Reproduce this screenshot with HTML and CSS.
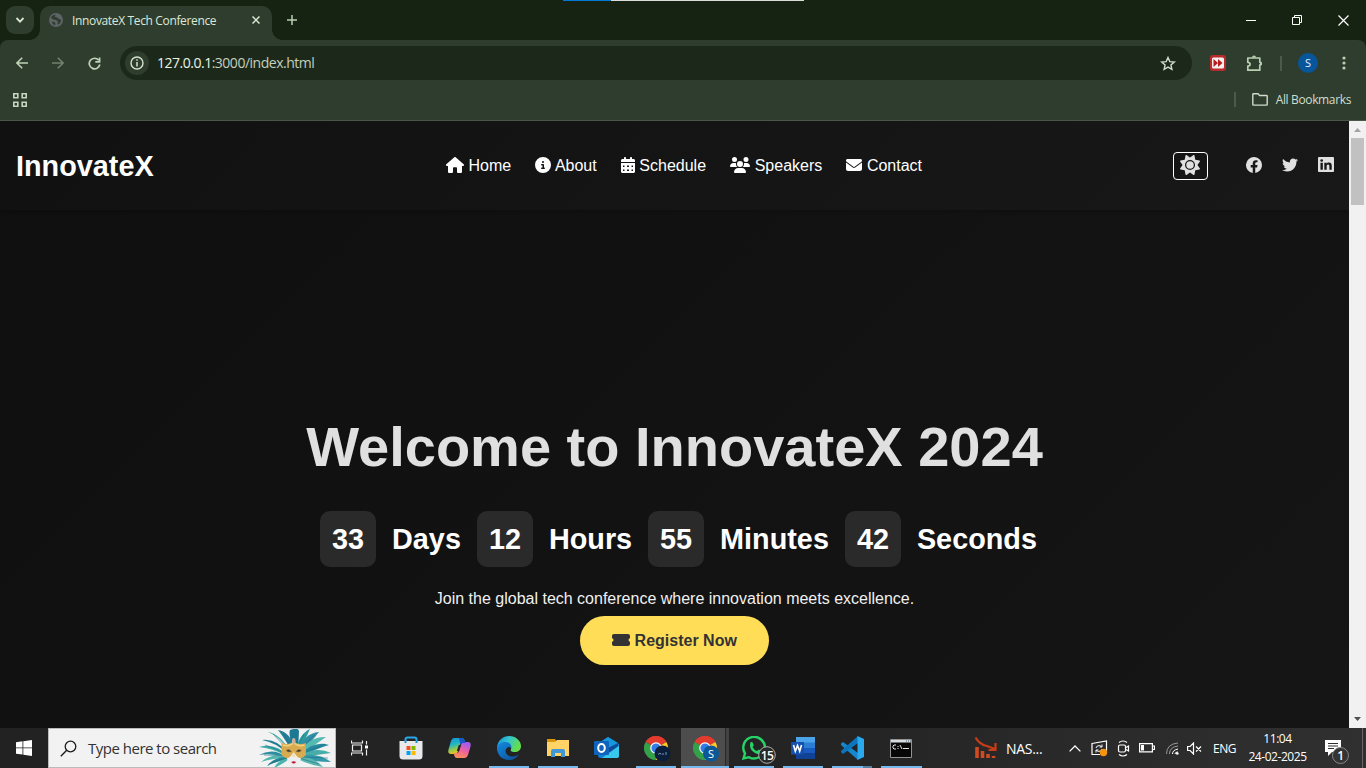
FILE: index.html
```html
<!DOCTYPE html>
<html lang="en">
<head>
<meta charset="utf-8">
<title>InnovateX Tech Conference</title>
<link rel="stylesheet" href="styles.css">
</head>
<body>
<div class="screen">
  <header class="tabstrip">
    <div class="top-progress"></div>
    <button class="tab-search"><svg width="10" height="10" viewBox="0 0 10 10"><path d="M1.500 3l3.500 3.600L8.500 3" fill="none" stroke="#d8e6d2" stroke-width="1.800"/></svg></button>
    <div class="tab">
      <svg width="14" height="14" viewBox="0 0 14 14"><circle cx="7" cy="7" r="7" fill="#5f6368"/><path d="M6.500 1.500L6 4l2.500.5 1 1.500 2.500.5-.5 3-2 2-1-.5.500-2.500-2-1.500-3-.5-2-2C2.500 3 4.500 1.800 6.500 1.500z M3 8.500l3 .8.500 1.700-.5 1.200C4.500 11.800 3 10.500 3 8.500z" fill="#2f3d2e"/></svg>
      <span class="tab-title">InnovateX Tech Conference</span>
      <svg class="tab-close" width="8" height="8" viewBox="0 0 8 8"><path d="M.5.5l7 7M7.500.5l-7 7" stroke="#d8e6d2" stroke-width="1.500"/></svg>
    </div>
    <svg class="new-tab" width="10" height="10" viewBox="0 0 10 10"><path d="M5 0v10M0 5h10" stroke="#b9cfb2" stroke-width="1.500"/></svg>
    <div class="window-controls">
      <svg width="11" height="11" viewBox="0 0 11 11"><path d="M0 5.500h10" stroke="#fff"/></svg>
      <svg width="11" height="11" viewBox="0 0 11 11"><path d="M.5 2.500h7v7h-7zM2.500 2.500v-2h7v7h-2" fill="none" stroke="#fff"/></svg>
      <svg width="11" height="11" viewBox="0 0 11 11"><path d="M.5.5l10 10M10.500.5l-10 10" stroke="#fff" stroke-width="1.200"/></svg>
    </div>
  </header>

  <div class="toolbar-wrap">
  <div class="toolbar">
    <svg class="nav-back" width="12" height="12" viewBox="0 0 12 12"><path d="M12 6H1M6.200.7L.9 6l5.300 5.300" fill="none" stroke="#bed3b7" stroke-width="1.600"/></svg>
    <svg class="nav-next" width="12" height="12" viewBox="0 0 12 12"><path d="M0 6h11M5.800.7L11.100 6l-5.300 5.300" fill="none" stroke="#71816d" stroke-width="1.600"/></svg>
    <svg class="nav-reload" width="13" height="13" viewBox="0 0 13 13"><path d="M11.800 7.500A5.300 5.300 0 1 1 10.700 3.200M11.600.5v4.300H7.300" fill="none" stroke="#bed3b7" stroke-width="1.700"/></svg>
    <div class="omnibox">
      <span class="site-info"><svg width="14" height="14" viewBox="0 0 14 14"><circle cx="7" cy="7" r="6" fill="none" stroke="#d4e2ce" stroke-width="1.400"/><path d="M7 6v4.500M7 3.300v1.500" stroke="#d4e2ce" stroke-width="1.500"/></svg></span>
      <span class="url"><b>127.0.0.1</b>:3000/index.html</span>
      <svg class="star" width="16" height="15" viewBox="0 0 16 15"><path d="M8 1.500l1.800 4.100 4.500.4-3.400 3 1 4.400L8 11.100l-3.900 2.300 1-4.400L1.700 6l4.500-.4z" fill="none" stroke="#d0dccb" stroke-width="1.400"/></svg>
    </div>
    <svg class="ext" width="16" height="16" viewBox="0 0 16 16"><rect width="16" height="16" rx="3" fill="#b92b2b"/><rect x="2" y="2.500" width="12" height="11" rx="1.500" fill="#f7f0f0"/><path d="M3.500 4l4.500 4-4.500 4zM8 4l4.500 4L8 12z" fill="#b71c1c"/></svg>
    <svg class="puzzle" width="17" height="17" viewBox="0 0 17 17"><path d="M1.800 3h12v4.300l1.200.7v1.500l-1.200.6v5.100h-12v-4.200c3 0 3-3.700 0-3.700z" fill="none" stroke="#b9cfb2" stroke-width="1.700" stroke-linejoin="round"/><path d="M6 2.500a2 2 0 0 1 4 0zM14 6.500a2 2 0 0 1 0 4z" fill="#b9cfb2"/></svg>
    <span class="divider"></span>
    <span class="avatar">S</span>
    <svg class="kebab" width="4" height="14" viewBox="0 0 4 14"><g fill="#b9cfb2"><circle cx="2" cy="2" r="1.600"/><circle cx="2" cy="7" r="1.600"/><circle cx="2" cy="12" r="1.600"/></g></svg>
  </div>
  </div>

  <div class="bookmarks">
    <svg width="14" height="14" viewBox="0 0 14 14"><path d="M.8.8h4v4h-4zM9.200.8h4v4h-4zM.8 9.200h4v4h-4zM9.200 9.200h4v4h-4z" fill="none" stroke="#c6d5c0" stroke-width="1.600"/></svg>
    <span class="divider"></span>
    <svg class="folder" width="16" height="13" viewBox="0 0 16 13"><path d="M.8 10.800V1.500q0-.7.700-.7H6l1.600 1.700h6.900q.7 0 .700.700v8.200q0 .7-.700.700h-13q-.7 0-.7-.7z" fill="none" stroke="#d0dccb" stroke-width="1.400"/></svg>
    <span class="bookmarks-label">All Bookmarks</span>
  </div>

  <div class="viewport">
    <main class="page">
      <nav class="navbar">
        <div class="logo">InnovateX</div>
        <ul class="menu">
          <li><svg width="18" height="16" viewBox="0 0 576 512"><path d="M575.800 255.500c0 18-15 32.100-32 32.100h-32l.7 160.200c0 2.700-.2 5.400-.5 8.100V472c0 22.100-17.900 40-40 40H392c-22.100 0-40-17.900-40-40V360c0-17.700-14.300-32-32-32H256c-17.700 0-32 14.300-32 32v112c0 22.100-17.900 40-40 40H104c-22.100 0-40-17.900-40-40V287.600H32c-18 0-32-14-32-32.100c0-9 3-17 10-24L266.400 8c7-7 15-8 22-8s15 2 21 7L564.800 231.500c8 7 12 15 11 24z"/></svg> Home</li>
          <li><svg width="16" height="16" viewBox="0 0 512 512"><path d="M256 512A256 256 0 1 0 256 0a256 256 0 1 0 0 512zM216 336h24V272H216c-13.300 0-24-10.700-24-24s10.700-24 24-24h48c13.300 0 24 10.700 24 24v88h8c13.300 0 24 10.700 24 24s-10.700 24-24 24H216c-13.300 0-24-10.700-24-24s10.700-24 24-24zm40-208a32 32 0 1 1 0 64 32 32 0 1 1 0-64z"/></svg> About</li>
          <li><svg width="14" height="16" viewBox="0 0 448 512"><path fill-rule="evenodd" d="M128 0c17.700 0 32 14.300 32 32V64H288V32c0-17.700 14.300-32 32-32s32 14.300 32 32V64h48c26.500 0 48 21.500 48 48v48H0V112C0 85.500 21.500 64 48 64H96V32c0-17.700 14.300-32 32-32zM0 192H448V464c0 26.500-21.500 48-48 48H48c-26.500 0-48-21.500-48-48V192zM64 272v48h48v-48zM192 272v48h64v-48zM336 272v48h48v-48zM64 400v48h48v-48zM192 400v48h64v-48zM336 400v48h48v-48z"/></svg> Schedule</li>
          <li><svg width="20" height="16" viewBox="0 0 640 512"><path d="M144 0a80 80 0 1 1 0 160A80 80 0 1 1 144 0zM512 0a80 80 0 1 1 0 160A80 80 0 1 1 512 0zM0 298.700C0 239.800 47.800 192 106.700 192h42.700c15.900 0 31 3.500 44.600 9.700c-1.300 7.200-1.900 14.700-1.900 22.300c0 38.200 16.800 72.500 43.300 96H21.300C9.600 320 0 310.400 0 298.700zM405.300 320h-.7c26.600-23.500 43.300-57.800 43.300-96c0-7.600-.7-15-1.900-22.300c13.600-6.300 28.700-9.700 44.600-9.700h42.700C592.200 192 640 239.800 640 298.700c0 11.800-9.600 21.300-21.300 21.300H405.300zM224 224a96 96 0 1 1 192 0 96 96 0 1 1 -192 0zM128 485.300C128 411.700 187.700 352 261.300 352H378.700C452.300 352 512 411.700 512 485.300c0 14.700-11.900 26.700-26.700 26.700H154.700c-14.700 0-26.700-11.900-26.700-26.700z"/></svg> Speakers</li>
          <li><svg width="16" height="16" viewBox="0 0 512 512"><path d="M48 64C21.500 64 0 85.500 0 112c0 15.100 7.100 29.300 19.200 38.400L236.800 313.600c11.400 8.500 27 8.500 38.400 0L492.800 150.400c12.100-9.100 19.200-23.300 19.200-38.400c0-26.500-21.500-48-48-48H48zM0 176V384c0 35.300 28.700 64 64 64H448c35.300 0 64-28.700 64-64V176L294.400 339.200c-22.800 17.100-54 17.100-76.800 0L0 176z"/></svg> Contact</li>
        </ul>
        <div class="nav-actions">
          <button class="theme"><svg width="20" height="20" viewBox="0 0 512 512"><path fill="#e0e0e0" d="M361.500 1.200c5 2.100 8.600 6.600 9.600 11.900L391 121l107.900 19.800c5.300 1 9.800 4.600 11.900 9.600s1.500 10.700-1.600 15.200L446.900 256l62.300 90.300c3.100 4.500 3.700 10.200 1.600 15.200s-6.600 8.600-11.900 9.600L391 391 371.100 498.900c-1 5.300-4.600 9.800-9.600 11.900s-10.700 1.500-15.200-1.600L256 446.900l-90.300 62.300c-4.500 3.100-10.200 3.700-15.200 1.600s-8.600-6.600-9.600-11.900L121 391 13.100 371.100c-5.300-1-9.800-4.600-11.900-9.600s-1.500-10.700 1.600-15.200L65.100 256 2.800 165.700c-3.100-4.500-3.700-10.200-1.600-15.200s6.600-8.600 11.900-9.600L121 121 140.900 13.100c1-5.300 4.600-9.800 9.600-11.900s10.700-1.500 15.200 1.600L256 65.100 346.300 2.800c4.500-3.100 10.200-3.700 15.200-1.600zM160 256a96 96 0 1 1 192 0 96 96 0 1 1 -192 0zm224 0a128 128 0 1 0 -256 0 128 128 0 1 0 256 0z"/></svg></button>
          <div class="social">
            <svg width="16" height="16" viewBox="0 0 16 16"><path d="M16 8.050A8 8 0 1 0 6.750 16v-5.620H4.720V8.050h2.030V6.280c0-2.020 1.200-3.130 3.020-3.130.88 0 1.790.16 1.790.16v1.980h-1c-1 0-1.310.62-1.310 1.250v1.510h2.220l-.35 2.330H9.250V16A8 8 0 0 0 16 8.050z"/></svg>
            <svg width="16" height="16" viewBox="0 0 512 512"><path d="M459.370 151.716c.325 4.548.325 9.097.325 13.645 0 138.720-105.583 298.558-298.558 298.558-59.452 0-114.680-17.219-161.137-47.106 8.447.974 16.568 1.299 25.340 1.299 49.055 0 94.213-16.568 130.274-44.832-46.132-.975-84.792-31.188-98.112-72.772 6.498.974 12.995 1.624 19.818 1.624 9.421 0 18.843-1.300 27.614-3.573-48.081-9.747-84.143-51.980-84.143-102.985v-1.299c13.969 7.797 30.214 12.670 47.431 13.319-28.264-18.843-46.781-51.005-46.781-87.391 0-19.492 5.197-37.360 14.294-52.954 51.655 63.675 129.300 105.258 216.365 109.807-1.624-7.797-2.599-15.918-2.599-24.040 0-57.828 46.782-104.934 104.934-104.934 30.213 0 57.502 12.670 76.670 33.137 23.715-4.548 46.456-13.320 66.599-25.340-7.798 24.366-24.366 44.833-46.132 57.827 21.117-2.273 41.584-8.122 60.426-16.243-14.292 20.791-32.161 39.308-52.628 54.253z"/></svg>
            <svg width="16" height="15" viewBox="0 0 448 448" preserveAspectRatio="none"><path d="M416 0H31.900C14.300 0 0 14.500 0 32.300v383.400C0 433.500 14.300 448 31.900 448H416c17.600 0 32-14.500 32-32.300V32.300C448 14.500 433.600 0 416 0zM135.400 384H69V170.200h66.500V384zM102.200 141a38.500 38.500 0 1 1 0-77 38.500 38.500 0 0 1 0 77zM384.300 384h-66.400V280c0-24.800-.5-56.700-34.500-56.700-34.600 0-39.900 27-39.900 54.900V384h-66.400V170.200h63.700v29.200h.9c8.900-16.800 30.600-34.500 62.900-34.500 67.200 0 79.700 44.300 79.700 101.900V384z"/></svg>
          </div>
        </div>
      </nav>
      <section class="hero">
        <h1>Welcome to InnovateX 2024</h1>
        <div class="countdown">
          <span class="num">33</span><span>Days</span>
          <span class="num">12</span><span>Hours</span>
          <span class="num">55</span><span>Minutes</span>
          <span class="num">42</span><span>Seconds</span>
        </div>
        <p>Join the global tech conference where innovation meets excellence.</p>
        <a class="register"><svg width="18" height="16" viewBox="0 0 576 512"><path d="M64 64C28.700 64 0 92.700 0 128v64c0 8.800 7.400 15.700 15.700 18.600C34.500 217.100 48 235 48 256s-13.500 38.900-32.300 45.400C7.400 304.300 0 311.200 0 320v64c0 35.300 28.700 64 64 64H512c35.300 0 64-28.700 64-64V320c0-8.800-7.400-15.700-15.700-18.600C541.500 294.900 528 277 528 256s13.500-38.900 32.300-45.400c8.300-2.900 15.700-9.800 15.700-18.600V128c0-35.300-28.700-64-64-64H64z"/></svg> Register Now</a>
      </section>
    </main>
    <aside class="scrollbar">
      <svg width="17" height="17" viewBox="0 0 17 17"><path d="M5 11l3.500-4 3.500 4z" fill="#a3a3a3"/></svg>
      <div class="thumb"></div>
      <svg class="down" width="17" height="17" viewBox="0 0 17 17"><path d="M5 6l3.500 4L12 6z" fill="#505050"/></svg>
    </aside>
  </div>

  <footer class="taskbar">
    <div class="start"><svg width="16" height="16" viewBox="0 0 16 16"><path d="M0 2.200l6.500-.9v6.200H0zM7.300 1.200L16 0v7.500H7.300zM0 8.300h6.500v6.300L0 13.700zM7.300 8.300H16V16l-8.700-1.200z" fill="#fff"/></svg></div>
    <div class="search">
      <svg width="17" height="17" viewBox="0 0 17 17"><circle cx="10.500" cy="6.500" r="5.300" fill="none" stroke="#1b1b1b" stroke-width="1.300"/><path d="M6.700 10.300L.8 16.200" stroke="#1b1b1b" stroke-width="1.400"/></svg>
      <span class="search-text">Type here to search</span>
      <svg class="mask" width="73" height="38" viewBox="0 0 73 38">
        <g fill="#2d9da0">
          <path d="M34 24Q26 10 19 1Q32 3 37 22z" fill="#267f96"/><path d="M35 22Q29 5 31 1Q39-2 40 2L39 22z" fill="#1d7894"/><path d="M36 22Q41 4 51 0Q47 9 40 23z"/>
          <path d="M31 23Q20 7 9 3Q22 5 32 24z" fill="#46b6ae"/><path d="M29 25Q16 13 3 11Q18 9 30 25z" fill="#247e93"/><path d="M28 27Q13 19 0 18Q16 13 29 27z" fill="#3caaa8"/><path d="M27 28Q12 24 0 26Q14 18 28 28z" fill="#2b8da0"/><path d="M28 29Q14 29 2 33Q14 23 29 28z" fill="#50b7ae"/><path d="M29 30Q18 32 8 37Q17 26 31 29z" fill="#258394"/><path d="M30 30Q24 35 15 39Q20 29 32 29z" fill="#4cb4ae"/>
          <path d="M38 23Q45 4 60 3Q53 12 41 25z" fill="#328fa5"/><path d="M40 24Q51 7 67 8Q54 17 42 26z" fill="#55bbb1"/><path d="M41 25Q56 11 70 16Q56 20 42 28z" fill="#278a9e"/><path d="M42 26Q58 17 72 24Q58 26 42 28z" fill="#46ada9"/><path d="M41 27Q58 23 72 33Q55 33 40 29z" fill="#3598a8"/><path d="M41 28Q54 27 64 38Q50 36 39 30z" fill="#59b5ae"/>
        </g>
        <g stroke="#196c82" stroke-width=".7" fill="none" opacity=".75"><path d="M31 23L14 5M29 25L6 16M29 27L5 26M30 28L10 35M38 24L55 6M40 26L66 15M41 28L69 29M40 29L60 35M34 22L25 5M37 22L45 5"/></g>
        <path d="M27.500 25h15q0 7-4 11.500-3.500 3-7 0-4-4.500-4-11.500z" fill="#eceef1"/>
        <path d="M22.500 14q6 2 10 0l2.200-5 2.200 5q5 2 10 0v12q-4 5-8.500 2l-3.700-5-3.700 5q-4 3-8.500-2z" fill="#d9ab51"/><path d="M24 16q6 2 10.700-2 5 4 10.700 2" stroke="#f0d180" fill="none" stroke-width="1.500"/>
        <path d="M33 28l1.700-6 1.700 6z" fill="#f5dfa8"/>
        <ellipse cx="34.700" cy="12" rx="1.800" ry="3" fill="#c7b29a"/>
        <path d="M27 21.500q3-2.500 5.500 1-3 1.500-5.500-1zM42.500 21.500q-3-2.500-5.500 1 3 1.500 5.500-1z" fill="#2c3941" stroke="#aa7930" stroke-width=".6"/>
        <path d="M32.300 33q2.400-1.500 4.800 0-2.400 3-4.800 0z" fill="#c71530"/>
      </svg>
    </div>
    <div class="task-view"><svg width="18" height="16" viewBox="0 0 18 16"><path d="M.5.500v2.500h11V.5M.5 15.500V13h11v2.500M1.500 5h9v6h-9zM15.500 1v3.500M15.500 9.500v6" fill="none" stroke="#eee" stroke-width="1.200"/><path d="M14 5.500h3v3h-3z" fill="#fff"/></svg></div>
    <div class="apps">
      <div class="app"><svg width="24" height="24" viewBox="0 0 24 24"><path d="M6.500 7V3.500Q6.500 1.500 8.500 1.500h7q2 0 2 2V7" fill="none" stroke="#28a8e8" stroke-width="2"/><path d="M.5 5h23v15q0 3.500-3.500 3.500H4Q.5 23.500.5 20z" fill="#e9e9eb"/><path d="M5.500 5h2v2h-2zM16.500 5h2v2h-2z" fill="#1e8fd0"/><path d="M7.500 10h4v4h-4z" fill="#f25022"/><path d="M12.500 10h4v4h-4z" fill="#7fba00"/><path d="M7.500 15h4v4h-4z" fill="#00a4ef"/><path d="M12.500 15h4v4h-4z" fill="#ffb900"/></svg></div>
      <div class="app"><svg width="23" height="22" viewBox="0 0 23 22"><defs><linearGradient id="cpa" x2=".3" y2="1"><stop stop-color="#1b8ce0"/><stop offset=".45" stop-color="#20b7c1"/><stop offset=".75" stop-color="#95c848"/><stop offset="1" stop-color="#f2c522"/></linearGradient><linearGradient id="cpb" x1=".6" x2=".2" y2="1"><stop stop-color="#a35af0"/><stop offset=".5" stop-color="#ef629b"/><stop offset="1" stop-color="#ff9450"/></linearGradient></defs><path d="M6 1h8q2 0 2.700 2.500l.8 2.500h-3q-2 0-2.600 2l-2 6.500Q9 17 6.500 17H3Q-.5 17 .5 12.500L3 4Q4 1 6 1z" fill="url(#cpa)"/><path d="M17 21H9q-2 0-2.700-2.500L5.500 16h3q2 0 2.600-2l2-6.500Q14 5 16.500 5H20q3.500 0 2.500 4.500L20 18q-1 3-3 3z" fill="url(#cpb)"/><path d="M11 1h3q2 0 2.700 2.500L17.500 6h-3q-1.500 0-2.200 1.500z" fill="#1957c9"/><path d="M10.800 8h2.200l-2 6H8.800z" fill="#242424"/></svg></div>
      <div class="app running"><svg width="24" height="24" viewBox="0 0 24 24"><defs><linearGradient id="ea" x2="1" y2=".35"><stop stop-color="#1688d3"/><stop offset=".5" stop-color="#32c6cf"/><stop offset="1" stop-color="#65df49"/></linearGradient><linearGradient id="eb" x2=".8" y2="1"><stop stop-color="#148be0"/><stop offset="1" stop-color="#0c549f"/></linearGradient></defs><path d="M0 11C1 4 6 0 12 0c7 0 12 5 12 10 0 4-3 6-6 6-4 0-5-1-4-3 1-3-1-5-5-5-4 0-7 2-9 6z" fill="url(#ea)"/><path d="M0 12c1-4 4-6 8-6 5 0 7 3 6 6-2-3-7 1-5 5 2 4 8 5 13 1-2 4-6 6-10 6C5 24 0 19 0 12z" fill="url(#eb)"/></svg></div>
      <div class="app running"><svg width="22" height="20" viewBox="0 0 22 20"><path d="M0 1h8l2 3H0z" fill="#d99508"/><path d="M0 4h8l2-2h12v16H0z" fill="#ffd365"/><path d="M4 19v-6q0-2 2-2h10q2 0 2 2v6h-4v-4H8v4z" fill="#3f97d6"/></svg></div>
      <div class="app"><svg width="25" height="24" viewBox="0 0 25 24"><path d="M3 8L14 1l11 7v11q0 3-3 3H7q-3 0-3-3z" fill="#1280d0"/><path d="M14 1l10 6-11 9L5 7z" fill="#1597dd"/><path d="M24 7v3L13 18l-3-4z" fill="#104b93"/><path d="M25 10v10q0 2-3 2H8l17-12z" fill="#37c8ee"/><rect x="0" y="5" width="15" height="14" rx="1" fill="#0f63bb"/><ellipse cx="7.500" cy="12" rx="3.300" ry="3.900" fill="none" stroke="#fff" stroke-width="2"/></svg></div>
      <div class="app running chrome"><svg width="28" height="27" viewBox="0 0 28 27"><g id="chrome"><path d="M12 12L1.600 6A12 12 0 0 1 22.400 6z" fill="#e33b2e"/><path d="M12 12L22.400 6A12 12 0 0 1 12 24z" fill="#ffca28"/><path d="M12 12v12A12 12 0 0 1 1.600 6z" fill="#34a04a"/><path d="M1.600 6A12 12 0 0 1 22.400 6H12z" fill="#e33b2e"/><circle cx="12" cy="12" r="5.800" fill="#fff"/><circle cx="12" cy="12" r="4.600" fill="#347be8"/></g><circle cx="18.500" cy="17.500" r="8" fill="#0b1e3c"/><path d="M14 18.500l2-1.500 1 1.500M18 18h2M22 16v3" stroke="#7c94b3" fill="none"/></svg></div>
      <div class="app running active chrome"><svg width="28" height="27" viewBox="0 0 28 27"><use href="#chrome"/><circle cx="18" cy="17.500" r="8" fill="#0b5798"/><text class="chrome-letter" x="18" y="21.500" text-anchor="middle">S</text></svg></div>
      <div class="app running whatsapp"><svg width="34" height="28" viewBox="0 0 34 28"><path d="M1.500 22.500L3 17.500A10.800 10.800 0 1 1 7 21.200z" fill="none" stroke="#25d366" stroke-width="2.400"/><path d="M8.500 6.300q1-.8 2 0l1.300 3-1.200 1.600q1.500 3.200 4.500 4.200l1.500-1.700 3 1.500q.3 3-3.500 3.300C10.500 17 6.500 12 8.500 6.300z" fill="#25d366"/><circle cx="25" cy="19" r="8.300" fill="#292929" stroke="#aaa"/><text class="badge-text" x="25" y="23.500" text-anchor="middle">15</text></svg></div>
      <div class="app running"><svg width="24" height="22" viewBox="0 0 24 22"><path d="M5 0h19v6H5z" fill="#4ba4e9"/><path d="M5 5.500h19V11H5z" fill="#2b7cd3"/><path d="M5 11h19v5.500H5z" fill="#185abd"/><path d="M5 16h19v6H5z" fill="#104194"/><path d="M0 5h13v12.500H0z" fill="#1650ae"/><path d="M2.500 8l1.800 6.300L6.500 8.500l2.200 5.800L10.500 8" fill="none" stroke="#fff" stroke-width="1.600"/></svg></div>
      <div class="app running double"><svg width="24" height="24" viewBox="0 0 24 24"><path d="M1 7.500l2-1.500L18 17v7L1 9z" fill="#1687ce"/><path d="M1 16l2 2L18 7V0L1 15z" fill="#0b75bd"/><path d="M17.500 0L24 3v18l-6.500 3z" fill="#2aa9ef"/></svg></div>
      <div class="app running"><svg width="22" height="19" viewBox="0 0 22 19"><path d="M.5.500h21v18H.5z" fill="#070707" stroke="#909497"/><path d="M1 1h20v2.500H1z" fill="#d7dbde"/><path d="M16 2h1M18 2h1M20 2h1" stroke="#425c73"/><path d="M6 6H4L3 7v2l1 1h2M8 7v1M8 9v1M10 6l2 4M13 9.500h6" stroke="#e4e4e4" fill="none"/></svg></div>
    </div>
    <div class="tray">
      <svg class="stock" width="22" height="22" viewBox="0 0 22 22"><path d="M.5.500Q5 8 12 9l8 3M20.500 6v7h-7" fill="none" stroke="#c83d17" stroke-width="2.200"/><path d="M2 10v11M7.500 14v7M13 17v4M18.500 19v2" stroke="#d24a20" stroke-width="3.600"/></svg>
      <span class="stock-text">NAS...</span>
      <svg class="chevron" width="12" height="7" viewBox="0 0 12 7"><path d="M.6 6.400L6 1l5.400 5.400" fill="none" stroke="#fff" stroke-width="1.300"/></svg>
      <svg class="update" width="17" height="17" viewBox="0 0 17 17"><path d="M1 3.500L15.500 1v10M1 3v11.500h8" fill="none" stroke="#fff" stroke-width="1.200"/><path d="M5 8q.5-2.500 3.500-2.500l2 1M11 4.500v2.500H8.500M11 9q-1 2.500-3.500 2.500L5.500 10.500M5 12.500V10h2.500" fill="none" stroke="#fff"/><circle cx="12.500" cy="12.500" r="3.700" fill="#f7930f"/></svg>
      <svg class="meet" width="13" height="17" viewBox="0 0 13 17"><rect x="1.500" y="5" width="7" height="7" rx="1.500" fill="none" stroke="#fff" stroke-width="1.200"/><path d="M9 7.500L11.500 6v5L9 9.500M2 2.500q4-3 8 0M2 14.500q4 3 8 0" fill="none" stroke="#fff" stroke-width="1.200"/></svg>
      <svg class="battery" width="16" height="10" viewBox="0 0 16 10"><path d="M.6.600h12.800v8.300H.6zM14 3h1.400v3.500H14" fill="none" stroke="#fff" stroke-width="1.200"/><path d="M2 2h3v5.500H2z" fill="#fff"/></svg>
      <svg class="wifi" width="13" height="13" viewBox="0 0 13 13"><g fill="none" stroke="#999"><path d="M.5 12Q.5 2 12 1M3.500 12Q3.500 5 12 4" /><path d="M6.500 12Q6.500 8 12 7M9 12q0-2 3-2" stroke="#fff"/></g><circle cx="11.300" cy="11.500" r="1.300" fill="#fff"/></svg>
      <svg class="mute" width="15" height="13" viewBox="0 0 15 13"><path d="M.6 4.500h2.500L6.500 1v11L3.100 8.500H.6zM9 4.500l5 5M14 4.500l-5 5" fill="none" stroke="#fff" stroke-width="1.200"/></svg>
      <span class="lang">ENG</span>
      <div class="clock"><span>11:04</span><span class="date">24-02-2025</span></div>
      <svg class="notify" width="26" height="26" viewBox="0 0 26 26"><path d="M1 1h16v12H8l-4 4v-4H1z" fill="#fff"/><path d="M4 4.500h10M4 7h10M4 9.500h6" stroke="#303030"/><circle cx="16.500" cy="16.500" r="8" fill="#343434" stroke="#888"/><text class="badge-text" x="16.500" y="21" text-anchor="middle">1</text></svg>
    </div>
  </footer>
</div>
</body>
</html>
```
FILE: styles.css
```css
* { box-sizing: border-box; }
body { margin: 0; font-family: "Open Sans", "Noto Sans", sans-serif; }
svg { display: block; flex: none; }
button { padding: 0; border: 0; }
.screen { width: 1366px; height: 768px; display: flex; flex-direction: column; overflow: hidden; }

.tabstrip { height: 40px; flex: none; background: #162313; display: flex; align-items: center; padding-left: 6px; position: relative; }
.top-progress { position: absolute; left: 563px; top: 0; width: 241px; height: 1px; background: linear-gradient(90deg, #0078d7 48px, #dadada 48px); }
.tab-search { width: 28px; height: 28px; border-radius: 9px; background: #2f3d2e; display: flex; align-items: center; justify-content: center; }
.tab { position: relative; align-self: flex-end; margin-left: 6px; width: 232px; height: 34px; padding: 0 12px 6px 9px; border-radius: 10px 10px 0 0; background: #2f3d2e; display: flex; align-items: center; }
.tab::before, .tab::after { content: ""; position: absolute; bottom: 0; width: 10px; height: 10px; }
.tab::before { left: -10px; background: radial-gradient(circle at 0 0, transparent 9.500px, #2f3d2e 10px); }
.tab::after { right: -10px; background: radial-gradient(circle at 100% 0, transparent 9.500px, #2f3d2e 10px); }
.tab-title { margin-left: 9px; font-size: 12px; letter-spacing: -.35px; color: #dce8d7; white-space: nowrap; }
.tab-close { margin-left: auto; }
.new-tab { margin-left: 15px; }
.window-controls { margin-left: auto; display: flex; gap: 35px; padding-right: 17px; }

.toolbar-wrap { flex: none; background: #162313; }
.toolbar { height: 46px; background: #2f3d2e; display: flex; align-items: center; padding-left: 16px; border-radius: 8px 8px 0 0; }
.nav-next { margin-left: 24px; }
.nav-reload { margin-left: 24px; }
.omnibox { margin-left: 19px; width: 1072px; height: 34px; border-radius: 17px; background: #1c291a; display: flex; align-items: center; padding: 0 16px 0 5px; }
.site-info { width: 24px; height: 24px; border-radius: 50%; background: #2f3d2e; display: flex; align-items: center; justify-content: center; }
.url { margin: -2px 0 0 8px; font-size: 14px; letter-spacing: -.49px; color: #c3cfbe; }
.url b { font-weight: 400; color: #eaf4e5; }
.star { margin-left: auto; }
.ext { margin-left: 18px; }
.puzzle { margin-left: 20px; }
.divider { width: 2px; height: 15px; background: #4a5b47; }
.puzzle + .divider { margin-left: 17px; }
.avatar { margin-left: 16px; width: 20px; height: 20px; border-radius: 50%; background: #07569b; color: #e3efff; font-size: 11px; text-align: center; line-height: 20px; }
.kebab { margin-left: 24px; }
.bookmarks { height: 35px; flex: none; background: #2f3d2e; border-bottom: 1px solid #4a5847; display: flex; align-items: center; padding: 0 15px 7px 13px; }
.bookmarks .divider { margin-left: auto; }
.folder { margin: 0 8px 0 16px; }
.bookmarks-label { font-size: 12px; letter-spacing: -.36px; color: #d2decd; }

.viewport { height: 607px; flex: none; display: flex; font-family: "Liberation Sans", Arial, sans-serif; }
.page { width: 1349px; background: linear-gradient(135deg, #0f0f0f, #151515); color: #fff; }
.navbar { height: 89px; padding: 0 15px 0 16px; background: linear-gradient(135deg, #111, #181818); box-shadow: 0 2px 3px rgba(0, 0, 0, .18); display: grid; grid-template-columns: 430px 1fr 161px; align-items: center; }
.logo { font-size: 28.800px; font-weight: 700; padding-top: 1px; }
.menu { list-style: none; display: flex; gap: 24.200px; margin: 0; padding: 0; font-size: 16px; line-height: 18px; white-space: nowrap; }
.menu svg, .register svg { display: inline-block; vertical-align: -2px; fill: currentColor; }
.nav-actions { display: flex; align-items: center; justify-content: space-between; }
.theme { width: 35px; height: 28px; border: 1px solid #fff; border-radius: 4px; background: #151515; display: flex; align-items: center; justify-content: center; padding: 0 1px 2px 0; }
.social { display: flex; align-items: center; gap: 20px; padding-bottom: 2px; fill: #e0e0e0; }
.hero { display: flex; flex-direction: column; align-items: center; padding-top: 205px; }
.hero h1 { margin: 0; font-size: 56px; line-height: 64px; color: #e0e0e0; white-space: nowrap; }
.countdown { margin-top: 32px; padding-left: 8px; display: flex; align-items: center; gap: 16px; font-size: 28.800px; font-weight: 700; }
.num { width: 56px; height: 56px; line-height: 56px; text-align: center; border-radius: 10px; background: #2a2a2a; }
.hero p { margin: 22px 0 8px; font-size: 16px; line-height: 19px; color: #f0f0f0; }
.register { height: 49px; padding: 0 32px; border-radius: 25px; background: #ffdd57; color: #333; font-size: 16px; font-weight: 700; line-height: 49px; white-space: nowrap; }
.scrollbar { width: 17px; background: #f1f1f1; display: flex; flex-direction: column; align-items: center; }
.thumb { width: 13px; height: 67px; background: #c1c1c1; }
.down { margin-top: auto; }

.taskbar { height: 40px; flex: none; background: linear-gradient(90deg, #222, #242424 60%, #303030); display: flex; color: #fff; }
.start { width: 48px; display: flex; align-items: center; justify-content: center; }
.search { width: 288px; background: #f2f2f2; border: 1px solid #bababa; display: flex; align-items: center; padding-left: 11px; }
.search-text { margin-left: 11px; width: 171px; font-size: 15px; letter-spacing: -.5px; color: #333; white-space: nowrap; }
.task-view { width: 48px; display: flex; align-items: center; justify-content: center; }
.apps { display: flex; padding-left: 2px; }
.app { width: 49.050px; height: 40px; display: flex; align-items: center; justify-content: center; position: relative; }
.app.running::after { content: ""; position: absolute; left: 5px; right: 4px; bottom: 0; height: 2px; background: #76b9ed; }
.app.active { background: linear-gradient(90deg, transparent 1px, #4d4d4d 1px, #4d4d4d 45px, #292929 45px, #292929 46px, #424242 46px); }
.app.active::after { left: 1px; right: 0; }
.app.double::after { background: linear-gradient(90deg, #76b9ed 31px, #5580a2 31px); }
.app.chrome { padding: 3px 0 0 4px; }
.app.whatsapp { padding: 4px 0 0 10px; }
.chrome-letter { font-size: 11px; fill: #fff; }
.badge-text { font-size: 12px; font-weight: 600; fill: #fff; letter-spacing: -.5px; }
.tray { margin-left: auto; display: flex; align-items: center; padding-right: 12px; border-right: 1px solid #666; margin-right: 3px; }
.stock-text { margin-left: 9px; width: 38px; font-size: 14px; letter-spacing: -.3px; }
.chevron { margin-left: 25px; }
.update { margin-left: 10px; }
.meet { margin-left: 9px; }
.battery { margin-left: 9px; }
.wifi { margin-left: 11px; }
.mute { margin-left: 8px; }
.lang { margin-left: 11px; width: 23px; font-size: 12px; letter-spacing: -.5px; }
.clock { margin-left: 12px; width: 59px; display: flex; flex-direction: column; align-items: center; font-size: 12px; line-height: 18px; letter-spacing: -.45px; white-space: nowrap; }
.notify { margin: 7px 0 0 17px; }
```
